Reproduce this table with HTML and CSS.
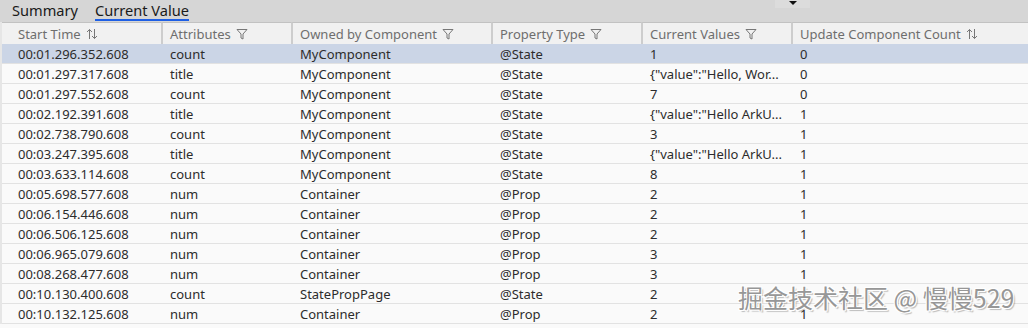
FILE: index.html
```html
<!DOCTYPE html>
<html>
<head>
<meta charset="utf-8">
<link rel="stylesheet" href="styles.css">
</head>
<body>
<div class="page">
  <div class="topbar">
    <div class="tab">Summary</div>
    <div class="tab active">Current Value</div>
    <div class="dropdown"><span class="tri"></span></div>
  </div>
  <div class="grid">
    <div class="hcell first">Start Time <svg class="ico" viewBox="0 0 12 12"><path d="M3.5 11V1.5M1 4L3.5 1.5 6 4M8.5 1v9.5M6 8l2.5 2.5L11 8" fill="none" stroke="#777" stroke-width="1"/></svg></div>
    <div class="hcell">Attributes <svg class="ico" viewBox="0 0 12 12"><path d="M1 1.5h10L7 6v5L5 10V6z" fill="none" stroke="#777" stroke-width="1" stroke-linejoin="round"/></svg></div>
    <div class="hcell">Owned by Component <svg class="ico" viewBox="0 0 12 12"><path d="M1 1.5h10L7 6v5L5 10V6z" fill="none" stroke="#777" stroke-width="1" stroke-linejoin="round"/></svg></div>
    <div class="hcell">Property Type <svg class="ico" viewBox="0 0 12 12"><path d="M1 1.5h10L7 6v5L5 10V6z" fill="none" stroke="#777" stroke-width="1" stroke-linejoin="round"/></svg></div>
    <div class="hcell">Current Values <svg class="ico" viewBox="0 0 12 12"><path d="M1 1.5h10L7 6v5L5 10V6z" fill="none" stroke="#777" stroke-width="1" stroke-linejoin="round"/></svg></div>
    <div class="hcell">Update Component Count <svg class="ico" viewBox="0 0 12 12"><path d="M3.5 11V1.5M1 4L3.5 1.5 6 4M8.5 1v9.5M6 8l2.5 2.5L11 8" fill="none" stroke="#777" stroke-width="1"/></svg></div>

    <div class="row sel"><span>00:01.296.352.608</span><span>count</span><span>MyComponent</span><span>@State</span><span>1</span><span>0</span></div>
    <div class="row"><span>00:01.297.317.608</span><span>title</span><span>MyComponent</span><span>@State</span><span>{"value":"Hello, Wor...</span><span>0</span></div>
    <div class="row"><span>00:01.297.552.608</span><span>count</span><span>MyComponent</span><span>@State</span><span>7</span><span>0</span></div>
    <div class="row"><span>00:02.192.391.608</span><span>title</span><span>MyComponent</span><span>@State</span><span>{"value":"Hello ArkU...</span><span>1</span></div>
    <div class="row"><span>00:02.738.790.608</span><span>count</span><span>MyComponent</span><span>@State</span><span>3</span><span>1</span></div>
    <div class="row"><span>00:03.247.395.608</span><span>title</span><span>MyComponent</span><span>@State</span><span>{"value":"Hello ArkU...</span><span>1</span></div>
    <div class="row"><span>00:03.633.114.608</span><span>count</span><span>MyComponent</span><span>@State</span><span>8</span><span>1</span></div>
    <div class="row"><span>00:05.698.577.608</span><span>num</span><span>Container</span><span>@Prop</span><span>2</span><span>1</span></div>
    <div class="row"><span>00:06.154.446.608</span><span>num</span><span>Container</span><span>@Prop</span><span>2</span><span>1</span></div>
    <div class="row"><span>00:06.506.125.608</span><span>num</span><span>Container</span><span>@Prop</span><span>2</span><span>1</span></div>
    <div class="row"><span>00:06.965.079.608</span><span>num</span><span>Container</span><span>@Prop</span><span>3</span><span>1</span></div>
    <div class="row"><span>00:08.268.477.608</span><span>num</span><span>Container</span><span>@Prop</span><span>3</span><span>1</span></div>
    <div class="row"><span>00:10.130.400.608</span><span>count</span><span>StatePropPage</span><span>@State</span><span>2</span><span>1</span></div>
    <div class="row"><span>00:10.132.125.608</span><span>num</span><span>Container</span><span>@Prop</span><span>2</span><span>1</span></div>
  </div>
  <div class="watermark">掘金技术社区 @ 慢慢529</div>
</div>
</body>
</html>
```

FILE: styles.css
```css
* { box-sizing: border-box; margin: 0; padding: 0; }
html, body { width: 1028px; height: 328px; overflow: hidden; }
body {
  background: #fafafa;
  font-family: "Noto Sans", "Noto Sans CJK SC", sans-serif;
  color: #2c2c2c;
}
.page { position: relative; width: 1028px; height: 328px; }
.topbar {
  height: 22px;
  background: #d6d6d6;
  display: flex;
  align-items: flex-start;
  position: relative;
}
.tab {
  font-size: 14.6px;
  line-height: 20px;
  height: 21px;
  color: #1a1a1a;
}
.tab:first-child { margin-left: 12px; }
.tab.active {
  margin-left: 17px;
  border-bottom: 2px solid #1d5fe6;
}
.dropdown {
  position: absolute;
  left: 775px;
  top: 0;
  width: 35px;
  height: 8px;
  background: #dcdcdc;
  display: flex;
  justify-content: center;
  align-items: flex-start;
}
.tri {
  margin-top: 1px;
  width: 0; height: 0;
  border-left: 4px solid transparent;
  border-right: 4px solid transparent;
  border-top: 4px solid #111;
}
.grid {
  display: grid;
  grid-template-columns: 159px 130px 200px 150px 150px 1fr;
  border-left: 2px solid #e6e6e6;
}
.hcell {
  height: 22px;
  background: #f1f1f1;
  border-top: 1px solid #c2c2c2;
  border-left: 2px solid #cdcdcd;
  padding-left: 7px;
  font-size: 13px;
  line-height: 20px;
  color: #6e6e6e;
  display: flex;
  align-items: center;
  gap: 5px;
  white-space: nowrap;
  overflow: hidden;
}
.hcell.first { border-left: none; padding-left: 16px; }
.ico { width: 12px; height: 12px; }
.row {
  display: contents;
}
.row span {
  height: 20px;
  line-height: 21px;
  font-size: 13px;
  padding-left: 9px;
  border-bottom: 1px solid #e2e2e2;
  white-space: nowrap;
  overflow: hidden;
  background: #fafafa;
}
.row span:first-child { padding-left: 16px; }
.row.sel span { background: #cbd5e6; }
.watermark {
  position: absolute;
  left: 738px;
  top: 282px;
  font-size: 25px;
  line-height: 30px;
  color: #979797;
  text-shadow: 1px 1px 0 #fff, -1px -1px 0 #fff, 1px -1px 0 #fff, -1px 1px 0 #fff, 2px 2px 1px rgba(0,0,0,0.25);
  font-family: "Noto Sans CJK SC", "Noto Sans", sans-serif;
}
```
